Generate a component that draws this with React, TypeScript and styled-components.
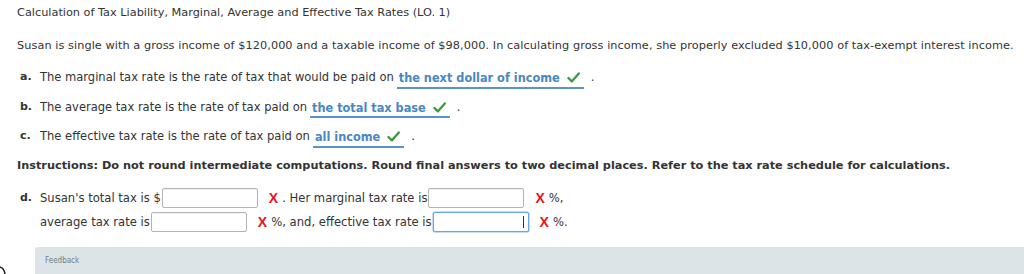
import React from "react";
import styled, { createGlobalStyle } from "styled-components";

const GlobalStyle = createGlobalStyle`
  html, body { margin: 0; padding: 0; background: #ffffff; }
  body { font-family: "DejaVu Sans", Verdana, sans-serif; color: #333333; }
  * { box-sizing: border-box; }
`;

const Page = styled.div`
  width: 1024px;
  height: 274px;
  overflow: hidden;
  display: flex;
  flex-direction: column;
`;

const Content = styled.div`
  padding: 6px 0 0 17px;
  display: flex;
  flex-direction: column;
`;

const Title = styled.div`
  font-size: 11.3px;
  line-height: 14px;
  height: 14px;
  white-space: nowrap;
`;

const Intro = styled.div`
  margin-top: 19px;
  font-size: 11.3px;
  letter-spacing: 0.06px;
  line-height: 14px;
  height: 14px;
  white-space: nowrap;
`;

const List = styled.div`
  margin-top: 9px;
  display: flex;
  flex-direction: column;
`;

const Item = styled.div`
  display: flex;
  align-items: center;
  height: 29.5px;
  font-family: "DejaVu Sans Condensed", "DejaVu Sans", sans-serif;
  font-size: 12.8px;
  white-space: nowrap;
`;

const Letter = styled.span`
  font-family: "DejaVu Sans", Verdana, sans-serif;
  font-weight: bold;
  font-size: 11px;
  width: 23px;
  padding-left: 3px;
  flex: none;
`;

const Blank = styled.span`
  display: inline-flex;
  align-items: center;
  gap: 7px;
  margin-left: 3px;
  padding: 1px 4px 0 2px;
  height: 21px;
  margin-top: 3px;
  border-bottom: 2px solid #5b93c9;
  color: #4a87c1;
  font-weight: bold;
  font-size: 12.6px;
`;

const Check = styled.svg`
  width: 13px;
  height: 11px;
  flex: none;
`;

const Period = styled.span`
  margin-left: 7px;
`;

const Instructions = styled.div`
  margin-top: 8px;
  font-size: 11.3px;
  font-weight: bold;
  line-height: 14px;
  height: 14px;
  white-space: nowrap;
`;

const Answers = styled.div`
  margin-top: 13px;
  display: flex;
  flex-direction: column;
`;

const AnswerRow = styled.div<{ $indent: number }>`
  display: flex;
  align-items: center;
  height: 24px;
  font-family: "DejaVu Sans Condensed", "DejaVu Sans", sans-serif;
  font-size: 12.9px;
  white-space: nowrap;
  padding-left: ${(p) => p.$indent}px;
`;

const Field = styled.span<{ $focused?: boolean }>`
  position: relative;
  display: inline-block;
  width: 96px;
  height: 20px;
  margin-left: 1px;
  border: 1px solid ${(p) => (p.$focused ? "#6aa6e0" : "#b4b4b4")};
  border-radius: 2px;
  background: #ffffff;
  box-shadow: ${(p) => (p.$focused ? "0 0 0 0.5px #8ab9e8" : "inset 0 1px 1px rgba(0,0,0,0.06)")};
  flex: none;
`;

const Caret = styled.span`
  position: absolute;
  right: 4px;
  top: 3px;
  width: 1px;
  height: 12px;
  background: #333333;
`;

const Cross = styled.span`
  font-family: "Liberation Sans", Arial, sans-serif;
  font-weight: bold;
  color: #e8141b;
  font-size: 14px;
  margin-left: 11px;
  margin-right: 4px;
`;

const FeedbackRow = styled.div`
  margin-top: 13px;
  flex: 1;
  display: flex;
`;

const Gutter = styled.div`
  width: 35px;
  flex: none;
  display: flex;
  align-items: flex-end;
`;

const Corner = styled.svg`
  width: 6px;
  height: 9px;
`;

const Feedback = styled.div`
  flex: 1;
  background: #dce4e7;
  border-radius: 3px 0 0 0;
  padding: 9px 0 0 10px;
  font-family: "DejaVu Sans Condensed", "DejaVu Sans", sans-serif;
  font-size: 8px;
  color: #6f7e84;
`;

const CheckMark = () => (
  <Check viewBox="0 0 13 11">
    <path d="M1.4 6 L4.8 9.4 L11.8 1.4" fill="none" stroke="#3b9a3b" strokeWidth="2.3" strokeLinecap="round" strokeLinejoin="round" />
  </Check>
);

const items = [
  { l: "a.", t: "The marginal tax rate is the rate of tax that would be paid on", a: "the next dollar of income" },
  { l: "b.", t: "The average tax rate is the rate of tax paid on", a: "the total tax base" },
  { l: "c.", t: "The effective tax rate is the rate of tax paid on", a: "all income" },
];

export default function App() {
  return (
    <Page>
      <GlobalStyle />
      <Content>
        <Title>Calculation of Tax Liability, Marginal, Average and Effective Tax Rates (LO. 1)</Title>
        <Intro>
          Susan is single with a gross income of $120,000 and a taxable income of $98,000. In calculating gross income, she properly excluded $10,000 of tax-exempt interest income.
        </Intro>
        <List>
          {items.map((it) => (
            <Item key={it.l}>
              <Letter>{it.l}</Letter>
              <span>{it.t}</span>
              <Blank>
                <span>{it.a}</span>
                <CheckMark />
              </Blank>
              <Period>.</Period>
            </Item>
          ))}
        </List>
        <Instructions>
          Instructions: Do not round intermediate computations. Round final answers to two decimal places. Refer to the tax rate schedule for calculations.
        </Instructions>
        <Answers>
          <AnswerRow $indent={0}>
            <Letter>d.</Letter>
            <span>Susan's total tax is $</span>
            <Field />
            <Cross>X</Cross>
            <span>. Her marginal tax rate is</span>
            <Field />
            <Cross>X</Cross>
            <span>%,</span>
          </AnswerRow>
          <AnswerRow $indent={23}>
            <span>average tax rate is</span>
            <Field />
            <Cross>X</Cross>
            <span>%, and, effective tax rate is</span>
            <Field $focused>
              <Caret />
            </Field>
            <Cross>X</Cross>
            <span>%.</span>
          </AnswerRow>
        </Answers>
      </Content>
      <FeedbackRow>
        <Gutter>
          <Corner viewBox="0 0 6 9">
            <path d="M0 2 Q4 3 5 9" fill="none" stroke="#222" strokeWidth="1.6" />
          </Corner>
        </Gutter>
        <Feedback>Feedback</Feedback>
      </FeedbackRow>
    </Page>
  );
}
